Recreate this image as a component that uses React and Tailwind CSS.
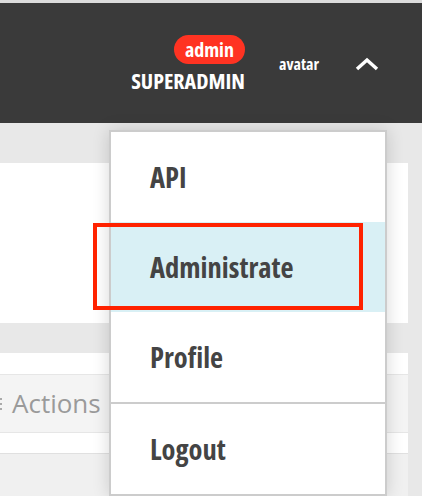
import React from 'react';

const condensed = "font-['Open_Sans','Noto_Sans',sans-serif] font-bold [font-stretch:75%]";

function MenuItem({ label, active }) {
  return (
    <div className={`flex h-[90px] items-center pl-[39px] ${active ? 'bg-[#d9f0f5]' : ''}`}>
      <span className={`${condensed} text-[28.5px] leading-none text-[#444]`}>{label}</span>
    </div>
  );
}

export default function App() {
  return (
    <div className="relative h-[496px] w-[422px] overflow-hidden bg-[#e8e8e8]">
      <div className="h-[3px] bg-[#dcdcdc]" />
      <header className="flex h-[120px] items-center justify-end bg-[#3a3a3a] pr-[43px]">
        <div className="mb-[2px] flex flex-col items-end">
          <span className={`${condensed} rounded-full bg-[#ff3322] px-[11px] text-[20px] leading-[29px] text-white`}>admin</span>
          <span className={`${condensed} mt-[6px] text-[22px] leading-[20px] text-white`}>SUPERADMIN</span>
        </div>
        <span className={`${condensed} ml-[34px] mt-[2px] text-[16px] text-white`}>avatar</span>
        <svg className="ml-[36px] mt-[2px]" width="24" height="14" viewBox="0 0 24 14">
          <path d="M2 12 L12 3 L22 12" fill="none" stroke="white" strokeWidth="3.5" />
        </svg>
      </header>

      <main className="pt-[40px]">
        <div className="h-[160px] w-[408px] bg-white" />
        <div className="mt-[30px] w-[408px] bg-white">
          <div className="h-[21px]" />
          <div className="flex h-[59px] items-center border-y border-[#e6e6e6] bg-[#f4f4f4]">
            <svg className="-ml-[18px]" width="20" height="18" viewBox="0 0 20 18">
              <rect x="0" y="3" width="20" height="2" fill="#aaa" />
              <rect x="0" y="8" width="20" height="2" fill="#aaa" />
              <rect x="0" y="13" width="20" height="2" fill="#aaa" />
            </svg>
            <span className="ml-[10px] font-['Open_Sans',sans-serif] text-[26px] text-[#9a9a9a]">Actions</span>
          </div>
          <div className="h-[21px] border-b border-[#e0e0e0]" />
        </div>
        <div className="h-[60px] w-[408px] bg-[#f0f0f0]" />
      </main>

      <div className="absolute left-[109px] top-[130px] w-[278px] border-2 border-[#cccccc] bg-white shadow-[0_0_16px_rgba(0,0,0,0.16)]">
        <MenuItem label="API" />
        <MenuItem label="Administrate" active />
        <MenuItem label="Profile" />
        <div className="h-[2px] bg-[#cccccc]" />
        <MenuItem label="Logout" />
      </div>

      <div className="absolute left-[93px] top-[223px] h-[87px] w-[270px] border-4 border-[#ff2200]" />
    </div>
  );
}
